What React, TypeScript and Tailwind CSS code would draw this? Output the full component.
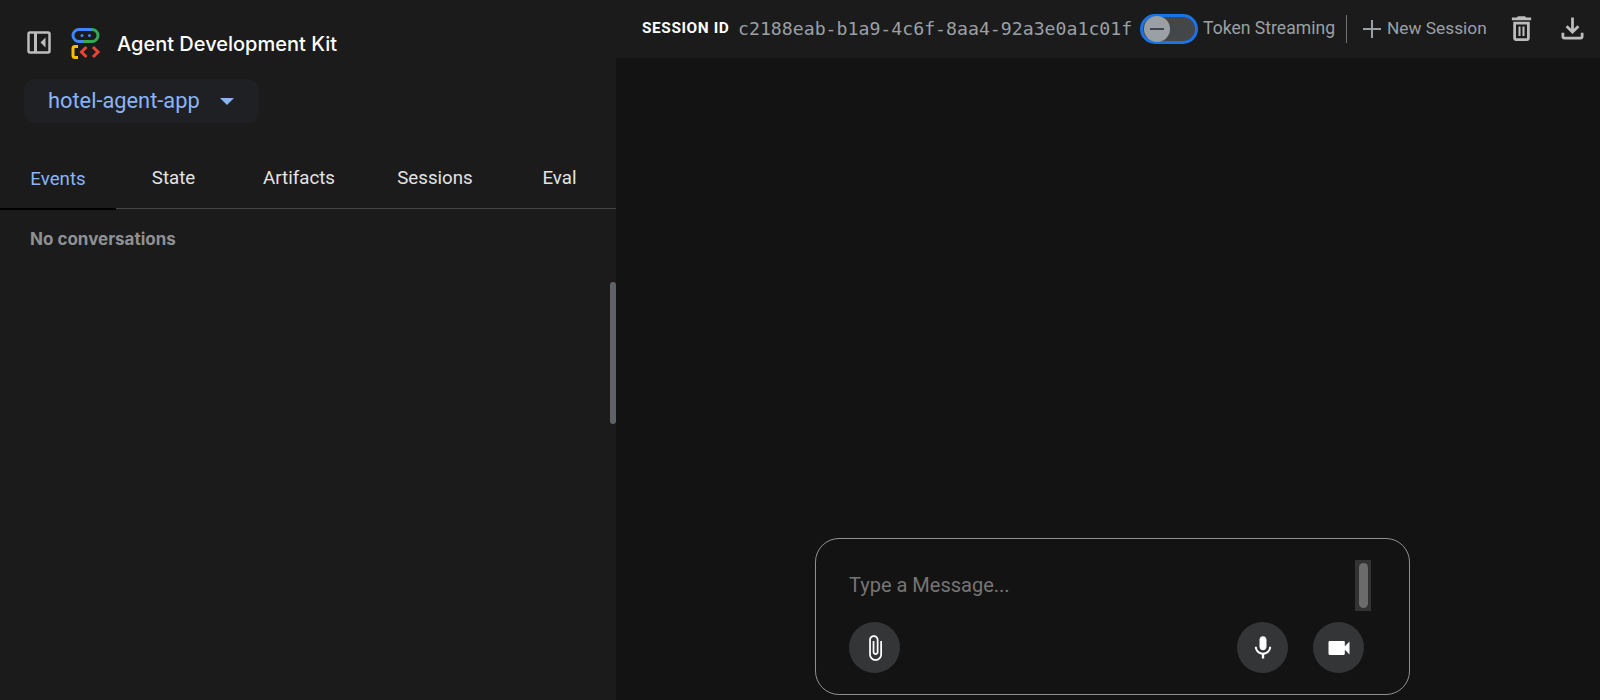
import React from "react";

const tabs = [
  { label: "Events", width: "w-[116px]", active: true },
  { label: "State", width: "w-[115px]", active: false },
  { label: "Artifacts", width: "w-[136px]", active: false },
  { label: "Sessions", width: "w-[136px]", active: false },
  { label: "Eval", width: "w-[113px]", active: false },
];

const Logo = () => (
  <svg width="30" height="32" viewBox="0 0 30 32" fill="none" className="shrink-0">
    <path d="M21 2.500H8a6 6 0 0 0 0 12h5" stroke="#4285f4" strokeWidth="3" />
    <path d="M21 2.500a6 6 0 0 1 0 12h-8" stroke="#34a853" strokeWidth="3" />
    <path d="M13 2.500h8" stroke="#4285f4" strokeWidth="3" />
    <circle cx="11" cy="8.500" r="1.500" fill="#4285f4" />
    <circle cx="18.500" cy="8.500" r="1.500" fill="#4285f4" />
    <path d="M7 19.500H4a2 2 0 0 0-2 2v7a2 2 0 0 0 2 2h3" stroke="#fbbc04" strokeWidth="3" />
    <path d="M15.500 20 10.500 25l5 5" stroke="#ea4335" strokeWidth="3" />
    <path d="M22 20 27 25l-5 5" stroke="#ea4335" strokeWidth="3" />
  </svg>
);

const PanelIcon = () => (
  <svg width="24" height="24" viewBox="0 0 24 24" fill="none" className="shrink-0">
    <rect x="1.500" y="1.500" width="21" height="20" rx="1.500" stroke="#bdbdbd" strokeWidth="2.500" />
    <rect x="7" y="2" width="3" height="19" fill="#bdbdbd" />
    <path d="M18.500 6.500v10l-5-5z" fill="#bdbdbd" />
  </svg>
);

const RoundButton = ({ d, size = 28 }: { d: string; size?: number }) => (
  <button className="w-[51px] h-[51px] rounded-full bg-[#333537] flex items-center justify-center text-white">
    <svg width={size} height={size} viewBox="0 0 24 24" fill="currentColor">
      <path d={d} />
    </svg>
  </button>
);

const App = () => {
  return (
    <div className="w-full h-[700px] overflow-hidden flex bg-[#131314] font-['Roboto',sans-serif]">
      <aside className="relative w-[616px] shrink-0 h-full bg-[#1b1b1b] flex flex-col">
        <div className="flex items-center h-[58px] mt-[14px] pl-[27px]">
          <PanelIcon />
          <div className="ml-[20px]">
            <Logo />
          </div>
          <span className="ml-[16px] pt-[2px] text-[20px] font-medium text-white font-['Inter',sans-serif]">
            Agent Development Kit
          </span>
        </div>
        <div className="ml-[24px] mt-[7px] w-[235px] h-[44px] rounded-[12px] bg-[#1f2023] flex items-center pl-[24px]">
          <span className="text-[21.800px] text-[#8ab4f8] leading-none">hotel-agent-app</span>
          <span className="ml-[20px] w-0 h-0 border-x-[7px] border-x-transparent border-t-[7px] border-t-[#8ab4f8]"></span>
        </div>
        <div className="flex mt-[32px] h-[54px] border-b border-[#444746]">
          {tabs.map((t) => (
            <div
              key={t.label}
              className={
                t.active
                  ? `${t.width} h-[55px] pb-[5px] flex items-center justify-center text-[18.700px] text-[#8ab4f8] border-b-2 border-black`
                  : `${t.width} h-[54px] pb-[7px] flex items-center justify-center text-[18.700px] text-[#e3e3e3]`
              }
            >
              {t.label}
            </div>
          ))}
        </div>
        <div className="pl-[30px] pt-[18px] text-[17px] font-bold text-[#8e9194] font-['Inter',sans-serif]">
          No conversations
        </div>
        <div className="absolute left-[610px] top-[282px] w-[6px] h-[142px] rounded-full bg-[#5f6368]"></div>
      </aside>

      <main className="flex-1 min-w-0 flex flex-col">
        <header className="h-[58px] bg-[#1b1b1b] flex items-center pl-[26px] pb-[1px]">
          <span className="w-[88px] whitespace-nowrap text-[15.400px] font-bold text-white tracking-[0.6px]">SESSION ID</span>
          <span className="ml-[8px] text-[18.200px] text-[#9aa0a6] font-['DejaVu_Sans_Mono',monospace] w-[394px] whitespace-nowrap">
            c2188eab-b1a9-4c6f-8aa4-92a3e0a1c01f
          </span>
          <span className="ml-[8px] w-[58px] h-[30px] rounded-full bg-[#44474a] border-[3px] border-[#1a73e8] flex items-center">
            <span className="ml-[1px] w-[26px] h-[26px] rounded-full bg-[#9aa0a6] flex items-center justify-center">
              <span className="w-[14px] h-[2px] bg-[#44474a]"></span>
            </span>
          </span>
          <span className="ml-[5px] text-[17.600px] text-[#9aa0a6]">Token Streaming</span>
          <span className="ml-[11px] w-px h-[28px] bg-[#6f7376]"></span>
          <svg width="20" height="20" viewBox="0 0 20 20" className="ml-[15px] text-[#9aa0a6]" stroke="currentColor" strokeWidth="2">
            <path d="M10 1v18M1 10h18" />
          </svg>
          <span className="ml-[5px] text-[17.300px] text-[#9aa0a6]">New Session</span>
          <svg width="33" height="33" viewBox="0 0 24 24" fill="#bdbdbd" className="ml-[18px]">
            <path d="M6 19c0 1.100.9 2 2 2h8c1.100 0 2-.9 2-2V7H6v12zM8 9h8v10H8V9zm7.500-5l-1-1h-5l-1 1H5v2h14V4z" />
            <path d="M9.800 10.500h1.500v7H9.800zM12.700 10.500h1.500v7h-1.500z" />
          </svg>
          <svg width="33" height="33" viewBox="0 0 24 24" fill="#bdbdbd" className="ml-[18px]">
            <path d="M18 15v3H6v-3H4v3c0 1.100.9 2 2 2h12c1.100 0 2-.9 2-2v-3h-2zm-1-4l-1.410-1.410L13 12.170V4h-2v8.170L8.410 9.590 7 11l5 5 5-5z" />
          </svg>
        </header>

        <div className="flex-1"></div>

        <div className="relative ml-[199px] mb-[5px] w-[595px] h-[157px] rounded-[24px] border border-[#8e9194] pl-[33px] pr-[45px]">
          <div className="pt-[32px] h-[83px] text-[20px] leading-[28px] text-[#757575]">Type a Message...</div>
          <div className="flex items-center gap-[25px]">
            <RoundButton d="M16.500 6v11.500c0 2.210-1.790 4-4 4s-4-1.790-4-4V5c0-1.380 1.120-2.500 2.500-2.500s2.500 1.120 2.500 2.500v10.500c0 .55-.45 1-1 1s-1-.45-1-1V6H10v9.500c0 1.380 1.120 2.500 2.500 2.500s2.500-1.120 2.500-2.500V5c0-2.210-1.790-4-4-4S7 2.790 7 5v12.500c0 3.040 2.460 5.500 5.500 5.500s5.500-2.460 5.500-5.500V6h-1.500z" />
            <div className="flex-1"></div>
            <RoundButton d="M12 14c1.660 0 3-1.340 3-3V5c0-1.660-1.340-3-3-3S9 3.340 9 5v6c0 1.660 1.340 3 3 3zm5.300-3c0 3-2.540 5.100-5.300 5.100S6.700 14 6.700 11H5c0 3.410 2.720 6.230 6 6.720V21h2v-3.280c3.280-.48 6-3.300 6-6.720h-1.700z" />
            <RoundButton d="M17 10.500V7c0-.55-.45-1-1-1H4c-.55 0-1 .45-1 1v10c0 .55.45 1 1 1h12c.55 0 1-.45 1-1v-3.500l4 4v-11l-4 4z" />
          </div>
          <div className="absolute left-[539px] top-[21px] w-[16px] h-[51px] bg-[#333333] flex items-center justify-center">
            <div className="w-[9px] h-[45px] rounded-full bg-[#6b6b6b]"></div>
          </div>
        </div>
      </main>
    </div>
  );
};

export default App;
